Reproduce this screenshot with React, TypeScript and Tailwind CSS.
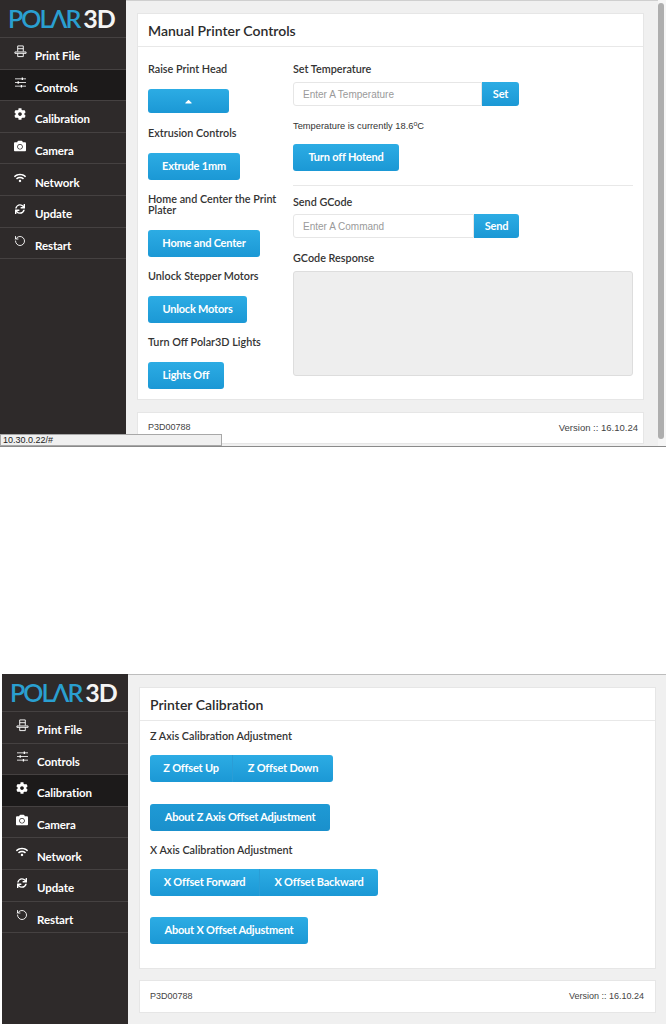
import type { ReactNode } from 'react';
import { RotateCcw } from 'lucide-react';
import { FaCog, FaCamera, FaWifi, FaSync, FaCaretUp } from 'react-icons/fa';

const lato = { fontFamily: 'Lato, sans-serif' };

function PrintIcon() {
  return (
    <svg viewBox="0 0 14 14" className="w-[13px] h-[13px]" fill="none" stroke="currentColor" strokeWidth="1">
      <path d="M4 7V1h6v6" />
      <path d="M1 7.5h12v1.5H1z" />
      <path d="M4 9v3.5h6V9" />
      <path d="M4 4h6" />
    </svg>
  );
}

function SlidersIcon() {
  return (
    <svg viewBox="0 0 14 12" className="w-[13px] h-[11px]" fill="none" stroke="currentColor">
      <path d="M1 2h12M1 6h12M1 10h12" strokeWidth="0.9" />
      <path d="M9 0.6v2.8M4.5 4.6v2.8M8 8.6v2.8" strokeWidth="1.4" />
    </svg>
  );
}

const navItems: { label: string; icon: ReactNode }[] = [
  { label: 'Print File', icon: <PrintIcon /> },
  { label: 'Controls', icon: <SlidersIcon /> },
  { label: 'Calibration', icon: <FaCog className="w-[12px] h-[12px]" /> },
  { label: 'Camera', icon: <FaCamera className="w-[12px] h-[12px]" /> },
  { label: 'Network', icon: <FaWifi className="w-[12px] h-[12px]" /> },
  { label: 'Update', icon: <FaSync className="w-[10px] h-[10px] ml-[1px]" /> },
  { label: 'Restart', icon: <RotateCcw className="w-[12px] h-[12px]" strokeWidth={1.8} /> },
];

function Sidebar({ active }: { active: string }) {
  return (
    <aside className="w-[126px] shrink-0 bg-[#2e2a2a] text-white">
      <div className="h-[37px] pl-[8px] flex items-center text-[25px] leading-none whitespace-nowrap font-[Lato,sans-serif]">
        <span className="text-[#2a9fd0] font-semibold tracking-[-2px]">POLΛR</span>
        <span className="font-bold text-[#f4f4f4] tracking-[-1px] ml-[4px]">3D</span>
      </div>
      <nav className="border-t border-[#454141]">
        {navItems.map((item) => (
          <a
            key={item.label}
            href="#"
            className={`h-[31.6px] border-b border-[#454141] flex items-center text-[11.5px] tracking-[-0.1px] font-bold ${
              item.label === active ? 'bg-[#1c1a1a]' : ''
            }`}
            style={lato}
          >
            <span className="w-[35px] pl-[14px] pb-[4px] shrink-0 flex items-center">{item.icon}</span>
            <span className="pt-[5px]">{item.label}</span>
          </a>
        ))}
      </nav>
    </aside>
  );
}

function Btn({ children, className = '' }: { children: ReactNode; className?: string }) {
  return (
    <button
      className={`h-[27px] rounded-[3px] bg-gradient-to-b from-[#2cace4] to-[#1b98d5] text-white text-[11px] tracking-[-0.2px] font-bold flex items-center justify-center ${className}`}
      style={lato}
    >
      {children}
    </button>
  );
}

function Label({ children, className = '' }: { children: ReactNode; className?: string }) {
  return (
    <p className={`text-[10.8px] leading-[11px] font-semibold text-[#333333] ${className}`} style={lato}>
      {children}
    </p>
  );
}

function InputGroup({ placeholder, action, inputWidth, actionWidth }: { placeholder: string; action: string; inputWidth: string; actionWidth: string }) {
  return (
    <div className="flex h-[24px]">
      <div
        className={`${inputWidth} border border-[#e6e6e6] rounded-l-[3px] bg-white text-[10px] text-[#9a9a9a] pl-[9px] flex items-center font-['Liberation_Sans',sans-serif]`}
      >
        {placeholder}
      </div>
      <Btn className={`${actionWidth} !h-[24px] !rounded-l-none`}>{action}</Btn>
    </div>
  );
}

function CardTitle({ children }: { children: ReactNode }) {
  return (
    <div className="h-[33px] border-b border-[#e8e8e8] pl-[10px] flex items-center text-[14px] font-semibold text-[#2b2b2b]" style={lato}>
      {children}
    </div>
  );
}

function FooterCard({ className, versionSize }: { className: string; versionSize: string }) {
  return (
    <div className={`bg-white border border-[#e6e6e6] pl-[10px] flex items-center justify-between text-[#444444] font-['Liberation_Sans',sans-serif] ${className}`}>
      <span className="text-[9px]">P3D00788</span>
      <span className={versionSize}>Version :: 16.10.24</span>
    </div>
  );
}

function ControlsScreen() {
  return (
    <section className="relative h-[447px] flex overflow-hidden border-b border-[#8a8a8a]">
      <Sidebar active="Controls" />
      <div className="flex-1 bg-[#f0f0f0] border-t border-[#cfcfcf] pt-[12px] pl-[11px] pr-[22px]">
        <div className="h-[387px] bg-white border border-[#e6e6e6]">
          <CardTitle>Manual Printer Controls</CardTitle>
          <div className="flex pl-[10px] pt-[16px]">
            <div className="w-[145px] shrink-0">
              <Label>Raise Print Head</Label>
              <Btn className="w-[81px] !h-[24px] mt-[15px]"><FaCaretUp className="w-[11px] h-[11px]" /></Btn>
              <Label className="mt-[14px]">Extrusion Controls</Label>
              <Btn className="w-[92px] mt-[15px]">Extrude 1mm</Btn>
              <Label className="mt-[13px] w-[140px]">Home and Center the Print Plater</Label>
              <Btn className="w-[112px] mt-[15px]">Home and Center</Btn>
              <Label className="mt-[13px]">Unlock Stepper Motors</Label>
              <Btn className="w-[99px] mt-[15px]">Unlock Motors</Btn>
              <Label className="mt-[13px]">Turn Off Polar3D Lights</Label>
              <Btn className="w-[76px] mt-[15px]">Lights Off</Btn>
            </div>
            <div className="w-[340px]">
              <Label>Set Temperature</Label>
              <div className="mt-[8px]">
                <InputGroup placeholder="Enter A Temperature" action="Set" inputWidth="w-[189px]" actionWidth="w-[37px]" />
              </div>
              <p className="mt-[14px] text-[9.3px] leading-[12px] text-[#333333] font-['Liberation_Sans',sans-serif]">
                Temperature is currently 18.6<sup className="text-[7px]">o</sup>C
              </p>
              <Btn className="w-[106px] mt-[12px]">Turn off Hotend</Btn>
              <hr className="mt-[14px] border-[#e8e8e8]" />
              <Label className="mt-[10px]">Send GCode</Label>
              <div className="mt-[7px]">
                <InputGroup placeholder="Enter A Command" action="Send" inputWidth="w-[181px]" actionWidth="w-[45px]" />
              </div>
              <Label className="mt-[14px]">GCode Response</Label>
              <div className="mt-[8px] h-[105px] bg-[#eeeeee] border border-[#dddddd] rounded-[3px]" />
            </div>
          </div>
        </div>
        <FooterCard className="h-[32px] mt-[12px] pr-[5px]" versionSize="text-[9.5px]" />
      </div>
      {/* browser scrollbar and status bubble sit over the page */}
      <div className="absolute right-0 top-0 bottom-0 w-[8px] bg-[#f6f6f6]">
        <div className="absolute left-0 top-[3px] w-[6px] h-[436px] rounded-full bg-[#aeaeae]" />
      </div>
      <div className="absolute left-0 bottom-0 w-[222px] h-[12px] bg-[#f0f0f0] border border-[#a8a8a8] text-[9px] leading-[10px] pl-[2px] text-[#222222] font-['Liberation_Sans',sans-serif]">
        10.30.0.22/#
      </div>
    </section>
  );
}

function CalibrationScreen() {
  return (
    <section className="h-[350px] flex pl-[2px]">
      <Sidebar active="Calibration" />
      <div className="flex-1 bg-[#f0f0f0] border-t border-[#bdbdbd] pt-[12px] pl-[11px] pr-[10px]">
        <div className="h-[282px] bg-white border border-[#e6e6e6]">
          <CardTitle>Printer Calibration</CardTitle>
          <div className="px-[10px] pt-[9px]">
            <Label>Z Axis Calibration Adjustment</Label>
            <div className="flex mt-[14px]">
              <Btn className="w-[83px] !rounded-r-none border-r border-[#2a9dd6]">Z Offset Up</Btn>
              <Btn className="w-[100px] !rounded-l-none">Z Offset Down</Btn>
            </div>
            <Btn className="w-[180px] mt-[22px] !from-[#1f9ad5] !to-[#1a90cc]">About Z Axis Offset Adjustment</Btn>
            <Label className="mt-[13px]">X Axis Calibration Adjustment</Label>
            <div className="flex mt-[14px]">
              <Btn className="w-[110px] !rounded-r-none border-r border-[#2a9dd6]">X Offset Forward</Btn>
              <Btn className="w-[118px] !rounded-l-none">X Offset Backward</Btn>
            </div>
            <Btn className="w-[158px] mt-[21px]">About X Offset Adjustment</Btn>
          </div>
        </div>
        <FooterCard className="h-[33px] mt-[11px] pr-[11px]" versionSize="text-[9px]" />
      </div>
    </section>
  );
}

export default function App() {
  return (
    <div className="w-[666px] h-[1024px] bg-white overflow-hidden">
      <ControlsScreen />
      <div className="h-[227px]" />
      <CalibrationScreen />
    </div>
  );
}
